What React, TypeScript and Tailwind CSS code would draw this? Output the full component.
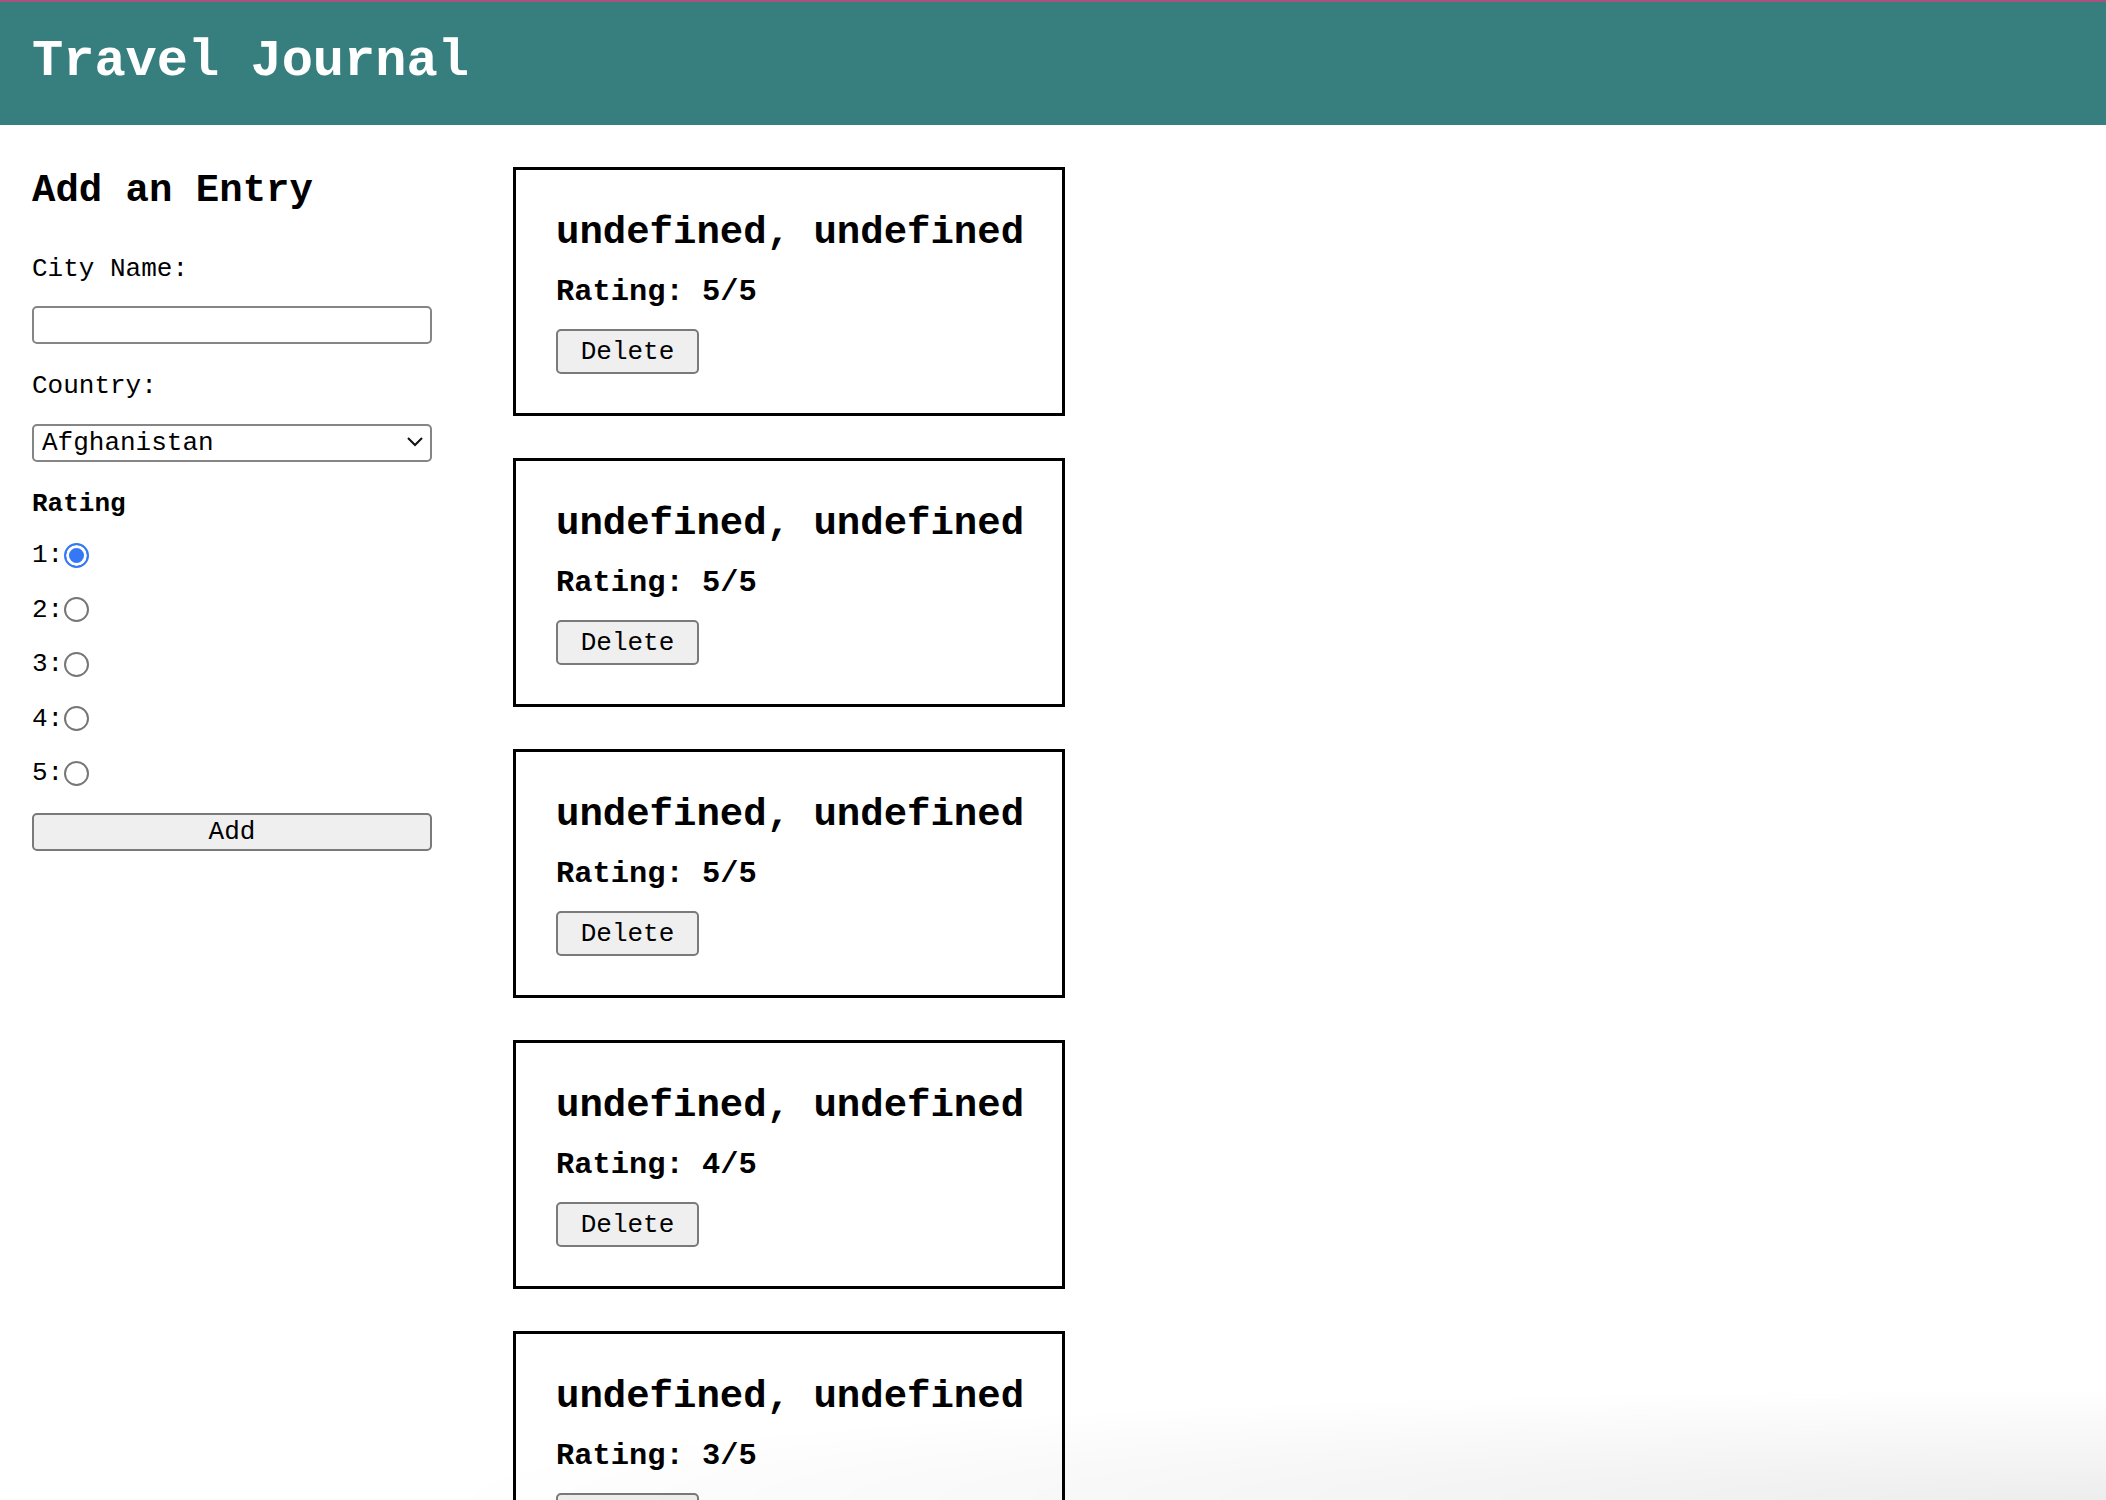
import { useState } from 'react';

type Entry = {
  id: number;
  city?: string;
  country?: string;
  rating: number;
};

const countries = ['Afghanistan', 'Albania', 'Algeria', 'Andorra', 'Angola', 'Argentina'];

const initialEntries: Entry[] = [
  { id: 1, rating: 5 },
  { id: 2, rating: 5 },
  { id: 3, rating: 5 },
  { id: 4, rating: 4 },
  { id: 5, rating: 3 },
];

function EntryCard({ entry, onDelete }: { entry: Entry; onDelete: () => void }) {
  return (
    <div className="border-[3px] border-black px-[40px] pt-[43px] pb-[39px]">
      <h2 className="whitespace-nowrap text-[39px] leading-[40px] font-bold">
        {`${entry.city}, ${entry.country}`}
      </h2>
      <h3 className="mt-[23px] text-[30.4px] leading-[32px] font-bold">
        Rating: {entry.rating}/5
      </h3>
      <button
        onClick={onDelete}
        className="mt-[21px] h-[45px] w-[143px] rounded-[5px] border-2 border-[#7a7a7a] bg-[#efefef] text-[26px] leading-none"
      >
        Delete
      </button>
    </div>
  );
}

export default function App() {
  const [entries, setEntries] = useState<Entry[]>(initialEntries);
  const [rating, setRating] = useState(1);
  const [city, setCity] = useState('');
  const [country, setCountry] = useState(countries[0]);

  const handleAdd = () => {
    setEntries([...entries, { id: Date.now(), rating }]);
    setCity('');
  };

  return (
    <div className="min-h-screen bg-white text-black font-['Liberation_Mono','Courier_New',monospace] text-[26px]">
      {/* Header */}
      <header className="h-[125px] border-t-2 border-[#a8527d] bg-[#377f7e] px-8 pt-[34px]">
        <h1 className="text-[52px] leading-none font-bold text-white">Travel Journal</h1>
      </header>

      <main className="flex items-start pl-8 gap-[81px]">
        {/* Formulario */}
        <section className="w-[400px] shrink-0 pt-[46px]">
          <h2 className="text-[39px] leading-[40px] font-bold">Add an Entry</h2>

          <label className="mt-[43px] block h-[30px] leading-[30px]">City Name:</label>
          <input
            value={city}
            onChange={(e) => setCity(e.target.value)}
            className="mt-[22px] block h-[38px] w-[400px] rounded-[5px] border-2 border-[#858585] px-2 outline-none"
          />

          <label className="mt-[27px] block h-[30px] leading-[30px]">Country:</label>
          <div className="relative mt-[23px] h-[38px] w-[400px]">
            <select
              value={country}
              onChange={(e) => setCountry(e.target.value)}
              className="h-full w-full appearance-none rounded-[5px] border-2 border-[#858585] bg-white pl-[8px] leading-[34px] outline-none"
            >
              {countries.map((c) => (
                <option key={c}>{c}</option>
              ))}
            </select>
            <svg
              className="pointer-events-none absolute right-[8px] top-[12px]"
              width="18"
              height="12"
              viewBox="0 0 18 12"
              fill="none"
              stroke="#111"
              strokeWidth="2"
            >
              <path d="M2 2l7 7 7-7" />
            </svg>
          </div>

          <p className="mt-[27px] h-[30px] leading-[30px] font-bold">Rating</p>

          <div className="mt-[21px] flex flex-col gap-[24.5px]">
            {[1, 2, 3, 4, 5].map((n) => (
              <label key={n} className="flex h-[30px] items-center leading-[30px]">
                <span>{n}:</span>
                <input
                  type="radio"
                  name="rating"
                  checked={rating === n}
                  onChange={() => setRating(n)}
                  className="ml-[1px] h-[25px] w-[25px] appearance-none rounded-full border-2 border-[#767676] bg-white checked:border-[#3478f6] checked:bg-[#3478f6] checked:shadow-[inset_0_0_0_3px_white]"
                />
              </label>
            ))}
          </div>

          <button
            onClick={handleAdd}
            className="mt-[25px] block h-[38px] w-[400px] rounded-[5px] border-2 border-[#7a7a7a] bg-[#efefef] text-[26px] leading-none"
          >
            Add
          </button>
        </section>

        {/* Lista de entradas */}
        <section className="flex w-[552px] flex-col gap-[42px] pt-[42px] pb-10">
          {entries.map((entry) => (
            <EntryCard
              key={entry.id}
              entry={entry}
              onDelete={() => setEntries(entries.filter((e) => e.id !== entry.id))}
            />
          ))}
        </section>
      </main>

      {/* sombra inferior de la captura */}
      <div className="pointer-events-none fixed bottom-0 right-0 h-[110px] w-[1650px] bg-[radial-gradient(ellipse_at_bottom_right,rgba(0,0,0,0.07),transparent_72%)]" />
    </div>
  );
}
